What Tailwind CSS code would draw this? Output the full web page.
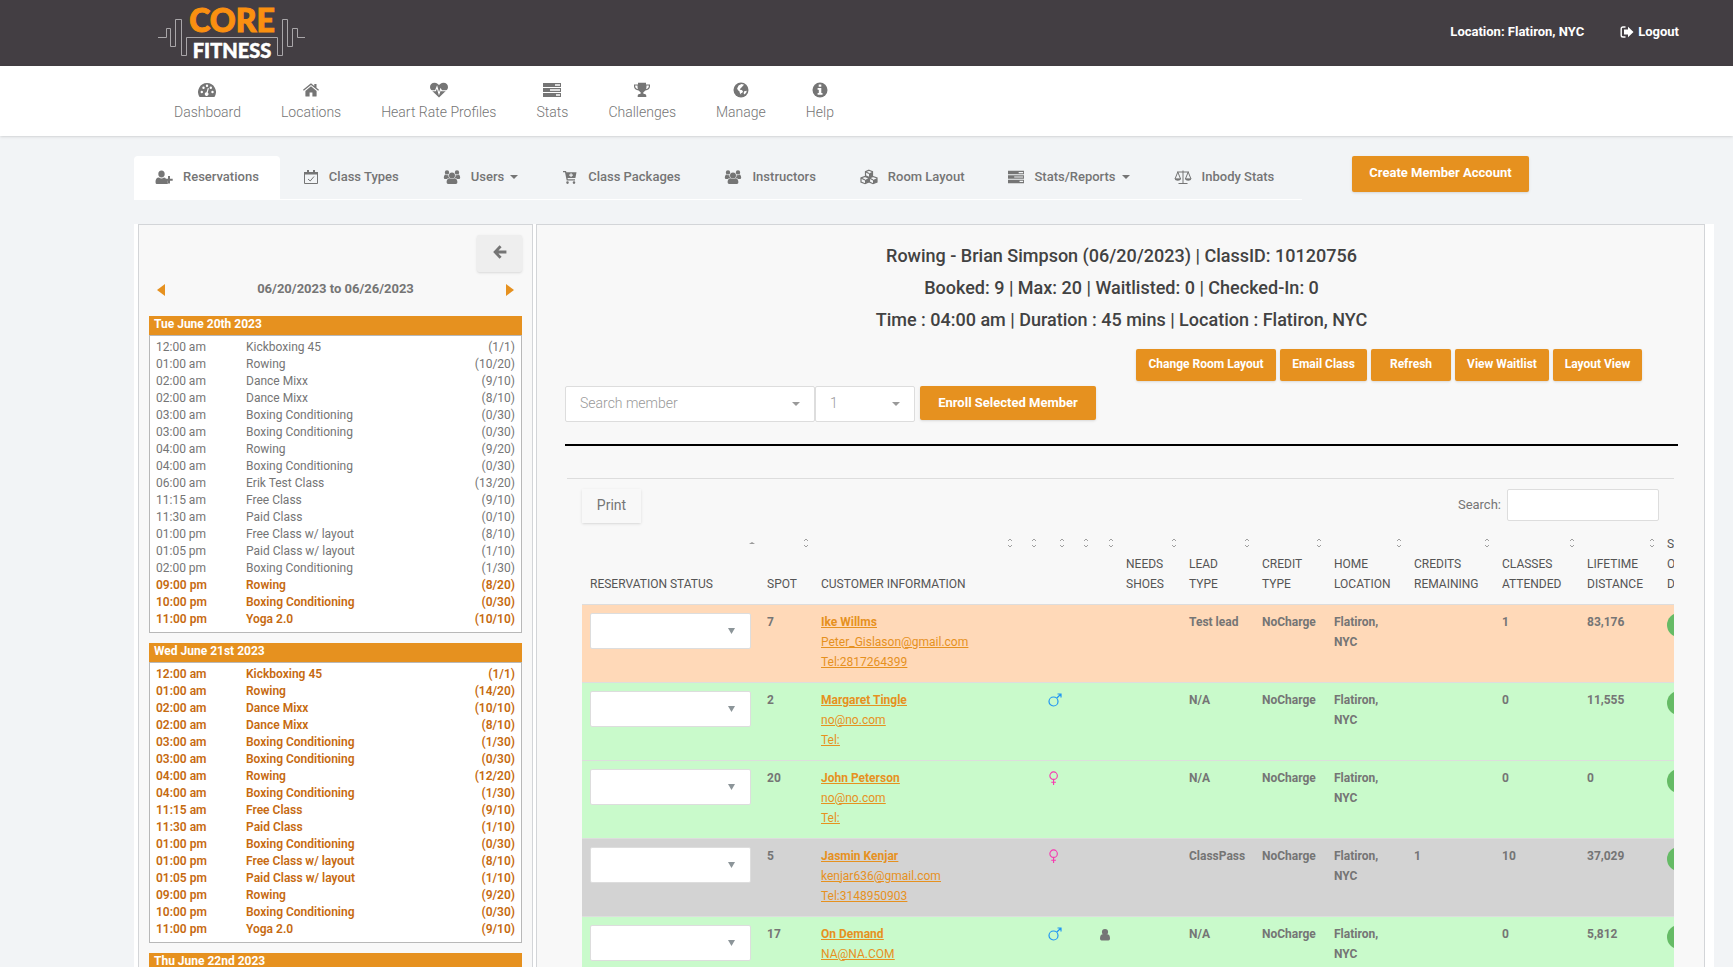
<!DOCTYPE html>
<html lang="en">
<head>
  <meta charset="UTF-8" />
  <meta name="viewport" content="width=device-width, initial-scale=1.0" />
  <title>Core Fitness - Reservations</title>
  <script src="https://cdn.jsdelivr.net/npm/@tailwindcss/browser@4"></script>
</head>
<body class="bg-[#f2f4f6] font-[Roboto,sans-serif] text-[#757575] min-h-screen">
  <!-- Icons -->
  <svg class="hidden">
    <symbol id="i-dash" viewBox="0 0 18 16"><path fill="currentColor" fill-rule="evenodd" d="M9 1a9 9 0 0 1 7.600 13.700q-.3.300-.6.300H2q-.4 0-.6-.300A9 9 0 0 1 9 1zM3.800 8.800a1.200 1.200 0 1 0 0 2.400 1.200 1.200 0 0 0 0-2.400zM5.500 4.500a1.200 1.200 0 1 0 0 2.400 1.200 1.200 0 0 0 0-2.400zM9 2.600a1.200 1.200 0 1 0 0 2.400 1.200 1.200 0 0 0 0-2.400zM12.800 4.500a1.200 1.200 0 1 0 0 2.400 1.200 1.200 0 0 0 0-2.400zM14.500 8.800a1.200 1.200 0 1 0 0 2.400 1.200 1.200 0 0 0 0-2.400zM9.800 6l-1.300 4.200a1.900 1.900 0 1 0 1.200.300l1.200-4.200z"/></symbol>
    <symbol id="i-home" viewBox="0 0 18 16"><path fill="currentColor" d="M9 4.200l5.600 4.700V14q0 .6-.6.600h-3.600v-4H7.600v4H4q-.6 0-.6-.600V8.900zM9 1.200l3.300 2.700V2h2.200v3.700L17 7.800l-.8 1L9 2.900 1.800 8.800l-.8-1 7-5.900z"/></symbol>
    <symbol id="i-heart" viewBox="0 0 18 16"><path fill="currentColor" d="M9 15.500L1.700 8.600Q0 7 0 5.200C0 2.500 1.800.8 4.500.8 7 .8 8.400 2.500 9 3.100 9.600 2.500 11 .8 13.500.8 16.200.8 18 2.500 18 5.200q0 1.800-1.700 3.400z"/><path fill="none" stroke="white" stroke-width="1.100" d="M.5 8.700h5L7 5l2 6.800L10.700 7l.9 1.700h6"/></symbol>
    <symbol id="i-stats" viewBox="0 0 18 16"><path fill="currentColor" fill-rule="evenodd" d="M0 1h18v4H0zM0 6h18v4H0zM0 11h18v4H0zM12 2.300v1.400h5V2.300zM7 7.300v1.400h10V7.300zM13 12.300v1.400h4v-1.400z"/></symbol>
    <symbol id="i-trophy" viewBox="0 0 18 16"><path fill="currentColor" fill-rule="evenodd" d="M5 .8h8v1.600h4v2c0 2-2 3.800-4.600 4-.6.800-1.600 1.300-2 1.700v1.700c1.800 0 2.900.7 2.900 2V15H4.700v-1.200c0-1.300 1.100-2 2.900-2v-1.700c-.4-.4-1.400-.9-2-1.700C3 8.200 1 6.400 1 4.400v-2h4zM2.200 3.600v.8c0 1 1.200 2.200 2.700 2.600q-.5-1.500-.4-3.400zM15.800 3.600h-2.300q.1 1.900-.4 3.400c1.500-.4 2.700-1.600 2.700-2.600z"/></symbol>
    <symbol id="i-globe" viewBox="0 0 16 16"><circle cx="8" cy="8" r="7.500" fill="currentColor"/><path fill="white" d="M8.500 2l2.700.7-1 .9-1.200 1.500-1.400 1.200-.8 1.500 2 .3 1.200 1.200-.7 1.500-1.300.4.200 1.500-1.400-1.700-.3-1.600-1.500-1.200-.9-1.800 1.500-2.900zM11.200 9.200l2.600-.4-.6 2-1.800 1.700-.8-1.300z"/></symbol>
    <symbol id="i-info" viewBox="0 0 16 16"><circle cx="8" cy="8" r="7.500" fill="currentColor"/><path fill="white" d="M6.700 2.600h2.600v2.200H6.700zM5.600 6h3.700v5h1.200v1.700H5.600V11h1.200V7.700H5.600z"/></symbol>
    <symbol id="i-useradd" viewBox="0 0 18 16"><path fill="currentColor" d="M6.500 1.500c2 0 3.200 1.300 3.200 3.500S8.500 8.600 6.500 8.600 3.300 7.200 3.300 5s1.200-3.500 3.200-3.500zM4 8.500q2.500 1.800 5 0l1.600.5v2.700h2.200V15H1.500Q.5 15 .5 13c0-2.500 1-4.500 3.500-4.500zM13 7h2v2.700h2.700v2H15v2.700h-2v-2.700h-2.400v-2H13z"/></symbol>
    <symbol id="i-cal" viewBox="0 0 16 16"><path fill="none" stroke="currentColor" d="M1.500 3.500h13v11h-13zM5 10l2.200 2L11 7.500"/><path fill="currentColor" d="M1 3h14v2.500H1zM4 1h2v3H4zM10 1h2v3h-2z"/></symbol>
    <symbol id="i-users" viewBox="0 0 18 16"><path fill="currentColor" d="M9 3.500a3 3 0 1 1 0 6 3 3 0 0 1 0-6zM6.500 9.300q2.500 1.600 5 0c2 .2 2.900 2 2.900 4q0 1.700-1.500 1.700H5.100q-1.500 0-1.500-1.700c0-2 .9-3.800 2.900-4zM4 1.200a2.200 2.200 0 1 1 0 4.400 2.200 2.200 0 0 1 0-4.400zM14 1.200a2.200 2.200 0 1 1 0 4.400 2.200 2.200 0 0 1 0-4.400zM2 5.500q1.500 1 3.300.5 0 2 1 3-1.700 0-2.400 1H2Q.8 10 .8 8.500T2 5.500zM16 5.500q-1.500 1-3.300.5 0 2-1 3 1.700 0 2.400 1H16q1.200 0 1.200-1.500T16 5.500z"/></symbol>
    <symbol id="i-cart" viewBox="0 0 16 16"><path fill="currentColor" fill-rule="evenodd" d="M1 2h3l.4 1.300H14.500L13.400 9H5.600l.2 1.200H13v1.300H4.700L3 3.300H1zM8.500 4.300v1.300H7.200v1.100h1.300V8h1.100V6.700h1.300V5.600H9.600V4.300zM5.500 12.300a1.300 1.300 0 1 1 0 2.600 1.300 1.300 0 0 1 0-2.600zM12 12.300a1.300 1.300 0 1 1 0 2.600 1.300 1.300 0 0 1 0-2.600z"/></symbol>
    <symbol id="i-cubes" viewBox="0 0 18 16"><path fill="none" stroke="currentColor" stroke-width="1.200" d="M9 1.200l3.500 1.500v4L9 8.200 5.500 6.700v-4zM5 7.500L8.500 9v4L5 14.700 1 13V9zM13 7.500L17 9v4l-4 1.700L9.500 13V9z"/><path fill="currentColor" d="M9 4.500l3.500-1.700v4L9 8.200zM5 11l3.500-1.700V13L5 14.700zM13 11l4-1.700V13l-4 1.700z"/><path fill="none" stroke="currentColor" stroke-width="1.200" d="M5.500 2.800L9 4.500M1 9l4 2M9.500 9l3.500 2"/></symbol>
    <symbol id="i-scale" viewBox="0 0 18 16"><path fill="none" stroke="currentColor" d="M9 1.500v12.500M3 3h12M4.500 14.500h9M3.800 3L1 10h5.600zM14.200 3l-2.800 7H17z"/><path fill="currentColor" d="M.6 9.800h6.400q-.6 2-3.200 2T.6 9.800zM11 9.800h6.400q-.6 2-3.200 2t-3.200-2z"/></symbol>
    <symbol id="i-logout" viewBox="0 0 14 14"><path fill="none" stroke="currentColor" stroke-width="1.400" d="M5.500 2H3Q1.200 2 1.200 3.800v6.400Q1.200 12 3 12h2.500"/><path fill="currentColor" d="M4 4.600h4V1.800L13.500 7 8 12.200V9.400H4z"/></symbol>
    <symbol id="i-caret" viewBox="0 0 8 4"><path fill="currentColor" d="M0 0h8L4 4z"/></symbol>
    <symbol id="i-sort" viewBox="0 0 8 12"><path fill="none" stroke="#a0a0a0" d="M2 4l2-2 2 2M2 8l2 2 2-2"/></symbol>
    <symbol id="i-male" viewBox="0 0 14 14"><path fill="none" stroke="#2196f3" stroke-width="1.200" d="M5.500 4a4.500 4.500 0 1 1 0 9 4.500 4.500 0 0 1 0-9zM8.600 5.200L13 1M9.500 1H13v3.500"/></symbol>
    <symbol id="i-female" viewBox="0 0 14 15"><path fill="none" stroke="#f739b0" stroke-width="1.200" d="M5.500 1a4 4 0 1 1 0 8 4 4 0 0 1 0-8zM5.500 9v6M3 12h5"/></symbol>
    <symbol id="i-user" viewBox="0 0 10 12"><path fill="currentColor" d="M5 0a3 3 0 1 1 0 6.200A3 3 0 0 1 5 0zM2.300 5.200q2.700 2.300 5.400 0Q10 5.800 10 9.500q0 1.900-1.500 1.900h-7Q0 11.400 0 9.500 0 5.800 2.300 5.200z"/></symbol>
  </svg>

  <header class="bg-[#433e43] text-white h-[66px] flex items-start justify-between pl-[150px] pr-[54px]">
    <svg class="w-[165px] h-[65px]" viewBox="0 0 165 65" role="img" aria-label="Core Fitness">
      <path fill="none" stroke="#a9a6a9" d="M8 37.500H16.500V28.500H20.500V46.500H25.500V19.500H31.500V55.500H36.500V37.500H127.500V55.500H132.500V19.500H137.500V46.500H142.500V28.500H147.500V37.500H155"/>
      <text x="82" y="32" text-anchor="middle" class="font-[Lato,sans-serif] font-black text-[32px]" fill="#fa9010" stroke="#fa9010">CORE</text>
      <text x="82" y="58" text-anchor="middle" class="font-[Lato,sans-serif] font-black text-[20px]" fill="#ffffff" stroke="#ffffff" stroke-width="0.500">FITNESS</text>
    </svg>
    <div class="flex items-center gap-9 pt-[22px] text-[13px] leading-5 font-bold">
      <span>Location: Flatiron, NYC</span>
      <a href="#" class="flex items-center gap-1"><svg class="size-3.5"><use href="#i-logout"/></svg>Logout</a>
    </div>
  </header>

  <nav class="bg-white h-[70px] pl-[174px] pt-4 flex gap-10 text-sm font-light shadow">
    <a href="#" class="flex flex-col items-center gap-1"><svg class="w-[18px] h-4"><use href="#i-dash"/></svg>Dashboard</a>
    <a href="#" class="flex flex-col items-center gap-1"><svg class="w-[18px] h-4"><use href="#i-home"/></svg>Locations</a>
    <a href="#" class="flex flex-col items-center gap-1"><svg class="w-[18px] h-4"><use href="#i-heart"/></svg>Heart Rate Profiles</a>
    <a href="#" class="flex flex-col items-center gap-1"><svg class="w-[18px] h-4"><use href="#i-stats"/></svg>Stats</a>
    <a href="#" class="flex flex-col items-center gap-1"><svg class="w-[18px] h-4"><use href="#i-trophy"/></svg>Challenges</a>
    <a href="#" class="flex flex-col items-center gap-1"><svg class="w-4 h-4"><use href="#i-globe"/></svg>Manage</a>
    <a href="#" class="flex flex-col items-center gap-1"><svg class="w-4 h-4"><use href="#i-info"/></svg>Help</a>
  </nav>

  <div class="flex items-start gap-[50px] pl-[134px] pt-5">
    <ul class="flex gap-0.5 h-11 w-[1168px] whitespace-nowrap text-[13px] leading-[42px] font-medium border-b border-white">
      <li class="bg-white rounded-t-sm"><a href="#" class="flex items-center gap-2.5 px-[21px]"><svg class="w-[18px] h-4"><use href="#i-useradd"/></svg>Reservations</a></li>
      <li><a href="#" class="flex items-center gap-2.5 px-[21px]"><svg class="w-4 h-4"><use href="#i-cal"/></svg>Class Types</a></li>
      <li><a href="#" class="flex items-center gap-2.5 px-[21px]"><svg class="w-[18px] h-4"><use href="#i-users"/></svg><span class="flex items-center gap-1.5">Users <svg class="w-2 h-1"><use href="#i-caret"/></svg></span></a></li>
      <li><a href="#" class="flex items-center gap-2.5 px-[21px]"><svg class="w-4 h-4"><use href="#i-cart"/></svg>Class Packages</a></li>
      <li><a href="#" class="flex items-center gap-2.5 px-[21px]"><svg class="w-[18px] h-4"><use href="#i-users"/></svg>Instructors</a></li>
      <li><a href="#" class="flex items-center gap-2.5 px-[21px]"><svg class="w-[18px] h-4"><use href="#i-cubes"/></svg>Room Layout</a></li>
      <li><a href="#" class="flex items-center gap-2.5 px-[21px]"><svg class="w-4 h-4"><use href="#i-stats"/></svg><span class="flex items-center gap-1.5">Stats/Reports <svg class="w-2 h-1"><use href="#i-caret"/></svg></span></a></li>
      <li><a href="#" class="flex items-center gap-2.5 px-[21px]"><svg class="w-[18px] h-4"><use href="#i-scale"/></svg>Inbody Stats</a></li>
    </ul>
    <button class="h-9 w-[177px] pb-0.5 rounded-xs bg-[#e6911f] text-white text-[13px] font-bold shadow">Create Member Account</button>
  </div>

  <div class="ml-[134px] mr-[19px] mt-6 pl-1 pr-[9px] bg-white flex gap-[3px]">
    <!-- Class schedule -->
    <aside class="w-[395px] shrink-0 bg-[#f8f8f8] border border-[#d3d5d8] px-2.5 pt-2.5">
      <div class="flex justify-end">
        <button class="w-[45px] h-[37px] rounded-xs bg-[#eeeeee] shadow-sm flex items-center justify-center pb-1" aria-label="Back">
          <svg class="size-3.5" viewBox="0 0 12 12"><path fill="none" stroke="#757575" stroke-width="2.400" d="M6.500 1L1.800 6l4.700 5M2 6h9.500"/></svg>
        </button>
      </div>
      <div class="flex items-center justify-between h-5 mt-2 mb-4 px-2 text-[13px] font-bold">
        <button aria-label="Previous week"><svg class="w-2 h-3" viewBox="0 0 8 12"><path fill="#e6911f" d="M8 0v12L0 6z"/></svg></button>
        <span class="pb-0.5">06/20/2023 to 06/26/2023</span>
        <button aria-label="Next week"><svg class="w-2 h-3" viewBox="0 0 8 12"><path fill="#e6911f" d="M0 0v12l8-6z"/></svg></button>
      </div>
      <div id="days"></div>
    </aside>

    <!-- Class details -->
    <main class="grow min-w-0 bg-[#f8f8f8] border border-[#d3d5d8] pl-7 pr-[26px]">
      <div class="pt-[15px] text-center text-[18px] leading-8 font-medium text-[#424242]">
        <h1>Rowing - Brian Simpson (06/20/2023) | ClassID: 10120756</h1>
        <h2>Booked: 9 | Max: 20 | Waitlisted: 0 | Checked-In: 0</h2>
        <h2>Time : 04:00 am | Duration : 45 mins | Location : Flatiron, NYC</h2>
      </div>
      <div class="flex justify-end gap-1 mt-[13px] pr-9 text-white text-xs font-bold">
        <button class="h-8 w-[140px] pb-0.5 rounded-xs bg-[#e6911f] shadow">Change Room Layout</button>
        <button class="h-8 w-[87px] pb-0.5 rounded-xs bg-[#e6911f] shadow">Email Class</button>
        <button class="h-8 w-20 pb-0.5 rounded-xs bg-[#e6911f] shadow">Refresh</button>
        <button class="h-8 w-[94px] pb-0.5 rounded-xs bg-[#e6911f] shadow">View Waitlist</button>
        <button class="h-8 w-[89px] pb-0.5 rounded-xs bg-[#e6911f] shadow">Layout View</button>
      </div>
      <div class="flex items-start mt-[5px] pb-[22px] border-b-2 border-black">
        <div class="relative w-[250px]">
          <select aria-label="Search member" class="appearance-none block w-full h-9 px-3.5 pb-0.5 bg-white border border-[#dddddd] rounded-xs text-sm font-light text-[#999999]"><option>Search member</option></select>
          <svg class="absolute right-[15px] top-4 w-2 h-1 text-[#999999]"><use href="#i-caret"/></svg>
        </div>
        <div class="relative w-[100px]">
          <select aria-label="Spots" class="appearance-none block w-full h-9 px-3.5 pb-0.5 bg-white border border-[#dddddd] rounded-xs text-sm font-light text-[#999999]"><option>1</option></select>
          <svg class="absolute right-[15px] top-4 w-2 h-1 text-[#999999]"><use href="#i-caret"/></svg>
        </div>
        <button class="ml-[5px] h-[34px] w-44 rounded-xs bg-[#e6911f] text-white text-[13px] font-bold shadow">Enroll Selected Member</button>
      </div>

      <div class="mt-8 ml-0.5 mr-1 border-t border-[#dddddd] overflow-hidden">
        <div class="flex justify-between items-start px-[15px] pt-2.5">
          <button class="h-[34px] w-[59px] pb-0.5 text-[14px] shadow-sm">Print</button>
          <label class="flex items-center gap-1.5 text-[13px]">Search:
            <input type="search" class="w-[152px] h-8 bg-white border border-[#dddddd] rounded-xs px-2" />
          </label>
        </div>
        <table class="ml-[15px] mt-2 w-[1160px] table-fixed text-xs leading-5 text-left font-bold">
          <colgroup>
            <col class="w-[177px]" /><col class="w-[54px]" /><col class="w-[204px]" /><col class="w-[24px]" /><col class="w-[28px]" /><col class="w-[24px]" /><col class="w-[25px]" /><col class="w-[63px]" /><col class="w-[73px]" /><col class="w-[72px]" /><col class="w-[80px]" /><col class="w-[88px]" /><col class="w-[85px]" /><col class="w-[80px]" /><col />
          </colgroup>
          <thead><tr id="heads" class="h-[73px] font-normal text-[#555555]"></tr></thead>
          <tbody id="members"></tbody>
        </table>
      </div>
    </main>
  </div>

  <script>
    const days = [
      ["Tue June 20th 2023", 14, "12:00 am,Kickboxing 45,1/1|01:00 am,Rowing,10/20|02:00 am,Dance Mixx,9/10|02:00 am,Dance Mixx,8/10|03:00 am,Boxing Conditioning,0/30|03:00 am,Boxing Conditioning,0/30|04:00 am,Rowing,9/20|04:00 am,Boxing Conditioning,0/30|06:00 am,Erik Test Class,13/20|11:15 am,Free Class,9/10|11:30 am,Paid Class,0/10|01:00 pm,Free Class w/ layout,8/10|01:05 pm,Paid Class w/ layout,1/10|02:00 pm,Boxing Conditioning,1/30|09:00 pm,Rowing,8/20|10:00 pm,Boxing Conditioning,0/30|11:00 pm,Yoga 2.0,10/10"],
      ["Wed June 21st 2023", 0, "12:00 am,Kickboxing 45,1/1|01:00 am,Rowing,14/20|02:00 am,Dance Mixx,10/10|02:00 am,Dance Mixx,8/10|03:00 am,Boxing Conditioning,1/30|03:00 am,Boxing Conditioning,0/30|04:00 am,Rowing,12/20|04:00 am,Boxing Conditioning,1/30|11:15 am,Free Class,9/10|11:30 am,Paid Class,1/10|01:00 pm,Boxing Conditioning,0/30|01:00 pm,Free Class w/ layout,8/10|01:05 pm,Paid Class w/ layout,1/10|09:00 pm,Rowing,9/20|10:00 pm,Boxing Conditioning,0/30|11:00 pm,Yoga 2.0,9/10"],
      ["Thu June 22nd 2023", 0, ""],
    ];
    // classes before the "past" index are over and shown in grey
    document.getElementById("days").innerHTML = days.map(([title, past, rows]) => `
      <section class="mb-2.5">
        <h3 class="h-[19px] pl-[5px] bg-[#e6911f] text-white text-xs leading-4 font-bold">${title}</h3>
        <div class="bg-white border border-[#b8b8b8] px-1.5 pt-[3px] pb-1">
          ${rows.split("|").filter(Boolean).map((r, i) => {
            const [time, name, count] = r.split(",");
            return `<a href="#" class="flex text-xs leading-[17px] ${i < past ? "text-[#757575]" : "text-[#c66a10] font-semibold"}"><span class="w-[90px]">${time}</span><span class="grow">${name}</span><span>(${count})</span></a>`;
          }).join("")}
        </div>
      </section>`).join("");

    const heads = ["RESERVATION STATUS", "SPOT", "CUSTOMER INFORMATION", "", "", "", "", "NEEDS SHOES", "LEAD<br>TYPE", "CREDIT TYPE", "HOME LOCATION", "CREDITS REMAINING", "CLASSES ATTENDED", "LIFETIME DISTANCE", "S<br>O<br>D"];
    document.getElementById("heads").innerHTML = heads.map((h, i) => `
      <th class="relative align-bottom pl-2 pb-2.5 font-normal">${h}
        ${i === 0 ? `<svg class="absolute right-[3px] top-2.5 w-2 h-1" viewBox="0 0 8 4"><path fill="#999999" d="M1 3h6L4 1z"/></svg>`
        : i < 14 ? `<svg class="absolute right-[3px] top-1.5 w-2 h-3"><use href="#i-sort"/></svg>` : ""}
      </th>`).join("");

    const members = [
      ["bg-[#ffd9b8]", "7", "Ike Willms", "Peter_Gislason@gmail.com", "2817264399", "", false, "Test lead", "", "1", "83,176"],
      ["bg-[#c9facb]", "2", "Margaret Tingle", "no@no.com", "", "male", false, "N/A", "", "0", "11,555"],
      ["bg-[#c9facb]", "20", "John Peterson", "no@no.com", "", "female", false, "N/A", "", "0", "0"],
      ["bg-[#d3d3d3]", "5", "Jasmin Kenjar", "kenjar636@gmail.com", "3148950903", "female", false, "ClassPass", "1", "10", "37,029"],
      ["bg-[#c9facb]", "17", "On Demand", "NA@NA.COM", "", "male", true, "N/A", "", "0", "5,812"],
    ];
    document.getElementById("members").innerHTML = members.map(([bg, spot, name, email, tel, sex, guest, lead, credits, attended, distance]) => `
      <tr class="h-[78px] border-t border-[#dddddd] align-top ${bg}">
        <td class="pl-2 pt-2"><div class="relative w-[161px]"><select aria-label="Status of ${name}" class="appearance-none block w-full h-9 bg-white border border-[#dddddd] rounded-xs"></select><svg class="absolute right-4 top-[15px] w-[7px] h-1.5 text-[#8c9599]" viewBox="0 0 7 6"><path fill="currentColor" d="M0 0h7L3.500 6z"/></svg></div></td>
        <td class="pl-2 pt-[7px]">${spot}</td>
        <td class="pl-2 pt-[7px] text-[#e6911f] underline font-normal"><a href="#" class="block font-bold">${name}</a><a href="mailto:${email}" class="block">${email}</a><a href="tel:${tel}" class="block">Tel:${tel}</a></td>
        <td></td>
        <td class="pl-[7px] pt-2.5">${sex ? `<svg class="size-3.5"><use href="#i-${sex}"/></svg>` : ""}</td>
        <td></td>
        <td class="pl-[7px] pt-3">${guest ? `<svg class="w-2.5 h-3"><use href="#i-user"/></svg>` : ""}</td>
        <td></td>
        <td class="pl-2 pt-[7px]">${lead}</td>
        <td class="pl-2 pt-[7px]">NoCharge</td>
        <td class="pl-2 pt-[7px]">Flatiron,<br>NYC</td>
        <td class="pl-2 pt-[7px]">${credits}</td>
        <td class="pl-2 pt-[7px]">${attended}</td>
        <td class="pl-2 pt-[7px]">${distance}</td>
        <td class="pl-2 pt-2"><div class="size-6 rounded-full bg-[#66bb66]"></div></td>
      </tr>`).join("");
  </script>
</body>
</html>
